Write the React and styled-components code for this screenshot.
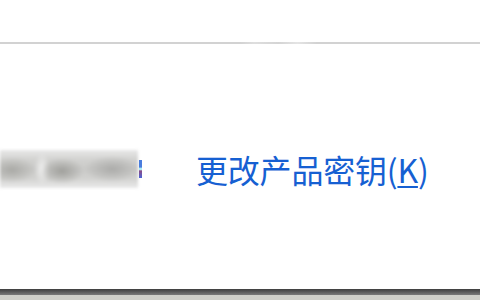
import React from "react";
import styled, { createGlobalStyle } from "styled-components";

const Global = createGlobalStyle`
  html, body { margin: 0; padding: 0; background: #ffffff; }
  body { font-family: "Noto Sans CJK SC", "Noto Sans", sans-serif; }
`;

const Page = styled.div`
  width: 480px;
  height: 300px;
  display: flex;
  flex-direction: column;
  background: #ffffff;
  overflow: hidden;
`;

const Divider = styled.div`
  margin-top: 42px;
  height: 2px;
  background: linear-gradient(90deg, #d2d2d2 0%, #d2d2d2 50%, #dedede 53%, #d4d4d4 58%, #e4e4e4 62%, #d2d2d2 66%, #d2d2d2 100%);
`;

const Row = styled.div`
  margin-top: 106px;
  height: 38px;
  display: flex;
  align-items: center;
`;

const Blurred = styled.div`
  width: 138px;
  height: 38px;
  background:
    radial-gradient(ellipse 24px 13px at 12px 20px, rgba(168,168,164,0.95), rgba(168,168,164,0) 100%),
    radial-gradient(ellipse 22px 13px at 62px 21px, rgba(160,160,156,1), rgba(160,160,156,0) 100%),
    radial-gradient(ellipse 28px 13px at 112px 19px, rgba(170,170,168,0.95), rgba(170,170,168,0) 100%),
    radial-gradient(ellipse 8px 16px at 42px 19px, rgba(245,245,245,0.9), rgba(245,245,245,0) 100%),
    linear-gradient(180deg, #e8e8e8 0%, #d2d2d0 25%, #cacac8 50%, #d2d2d0 75%, #eaeaea 100%);
  filter: blur(1.5px);
`;

const Edge = styled.div`
  width: 3px;
  height: 18px;
  margin-left: 1px;
  background: linear-gradient(180deg, #2a66d8 0%, #2a66d8 40%, #9fe8f4 45%, #9fe8f4 55%, #7a2a70 60%, #2a4ad0 100%);
  opacity: 0.85;
`;

const Link = styled.a`
  margin-left: 54px;
  font-family: "Noto Sans CJK SC", "Noto Sans", sans-serif;
  font-size: 32px;
  line-height: 38px;
  color: #1660d2;
  text-decoration: none;
  white-space: nowrap;
  letter-spacing: -0.2px;
`;

const Key = styled.span`
  text-decoration: underline;
  text-underline-offset: 3px;
  text-decoration-thickness: 2px;
`;

const Spacer = styled.div`
  flex: 1;
`;

const BottomBar = styled.div`
  height: 6px;
  background: linear-gradient(180deg, #3e3e3e 0%, #555555 40%, #7a7a7a 100%);
`;

const Floor = styled.div`
  height: 5px;
  background: #cfcfc9;
`;

export default function App() {
  return (
    <Page>
      <Global />
      <Divider />
      <Row>
        <Blurred />
        <Edge />
        <Link href="#">
          更改产品密钥(<Key>K</Key>)
        </Link>
      </Row>
      <Spacer />
      <BottomBar />
      <Floor />
    </Page>
  );
}
